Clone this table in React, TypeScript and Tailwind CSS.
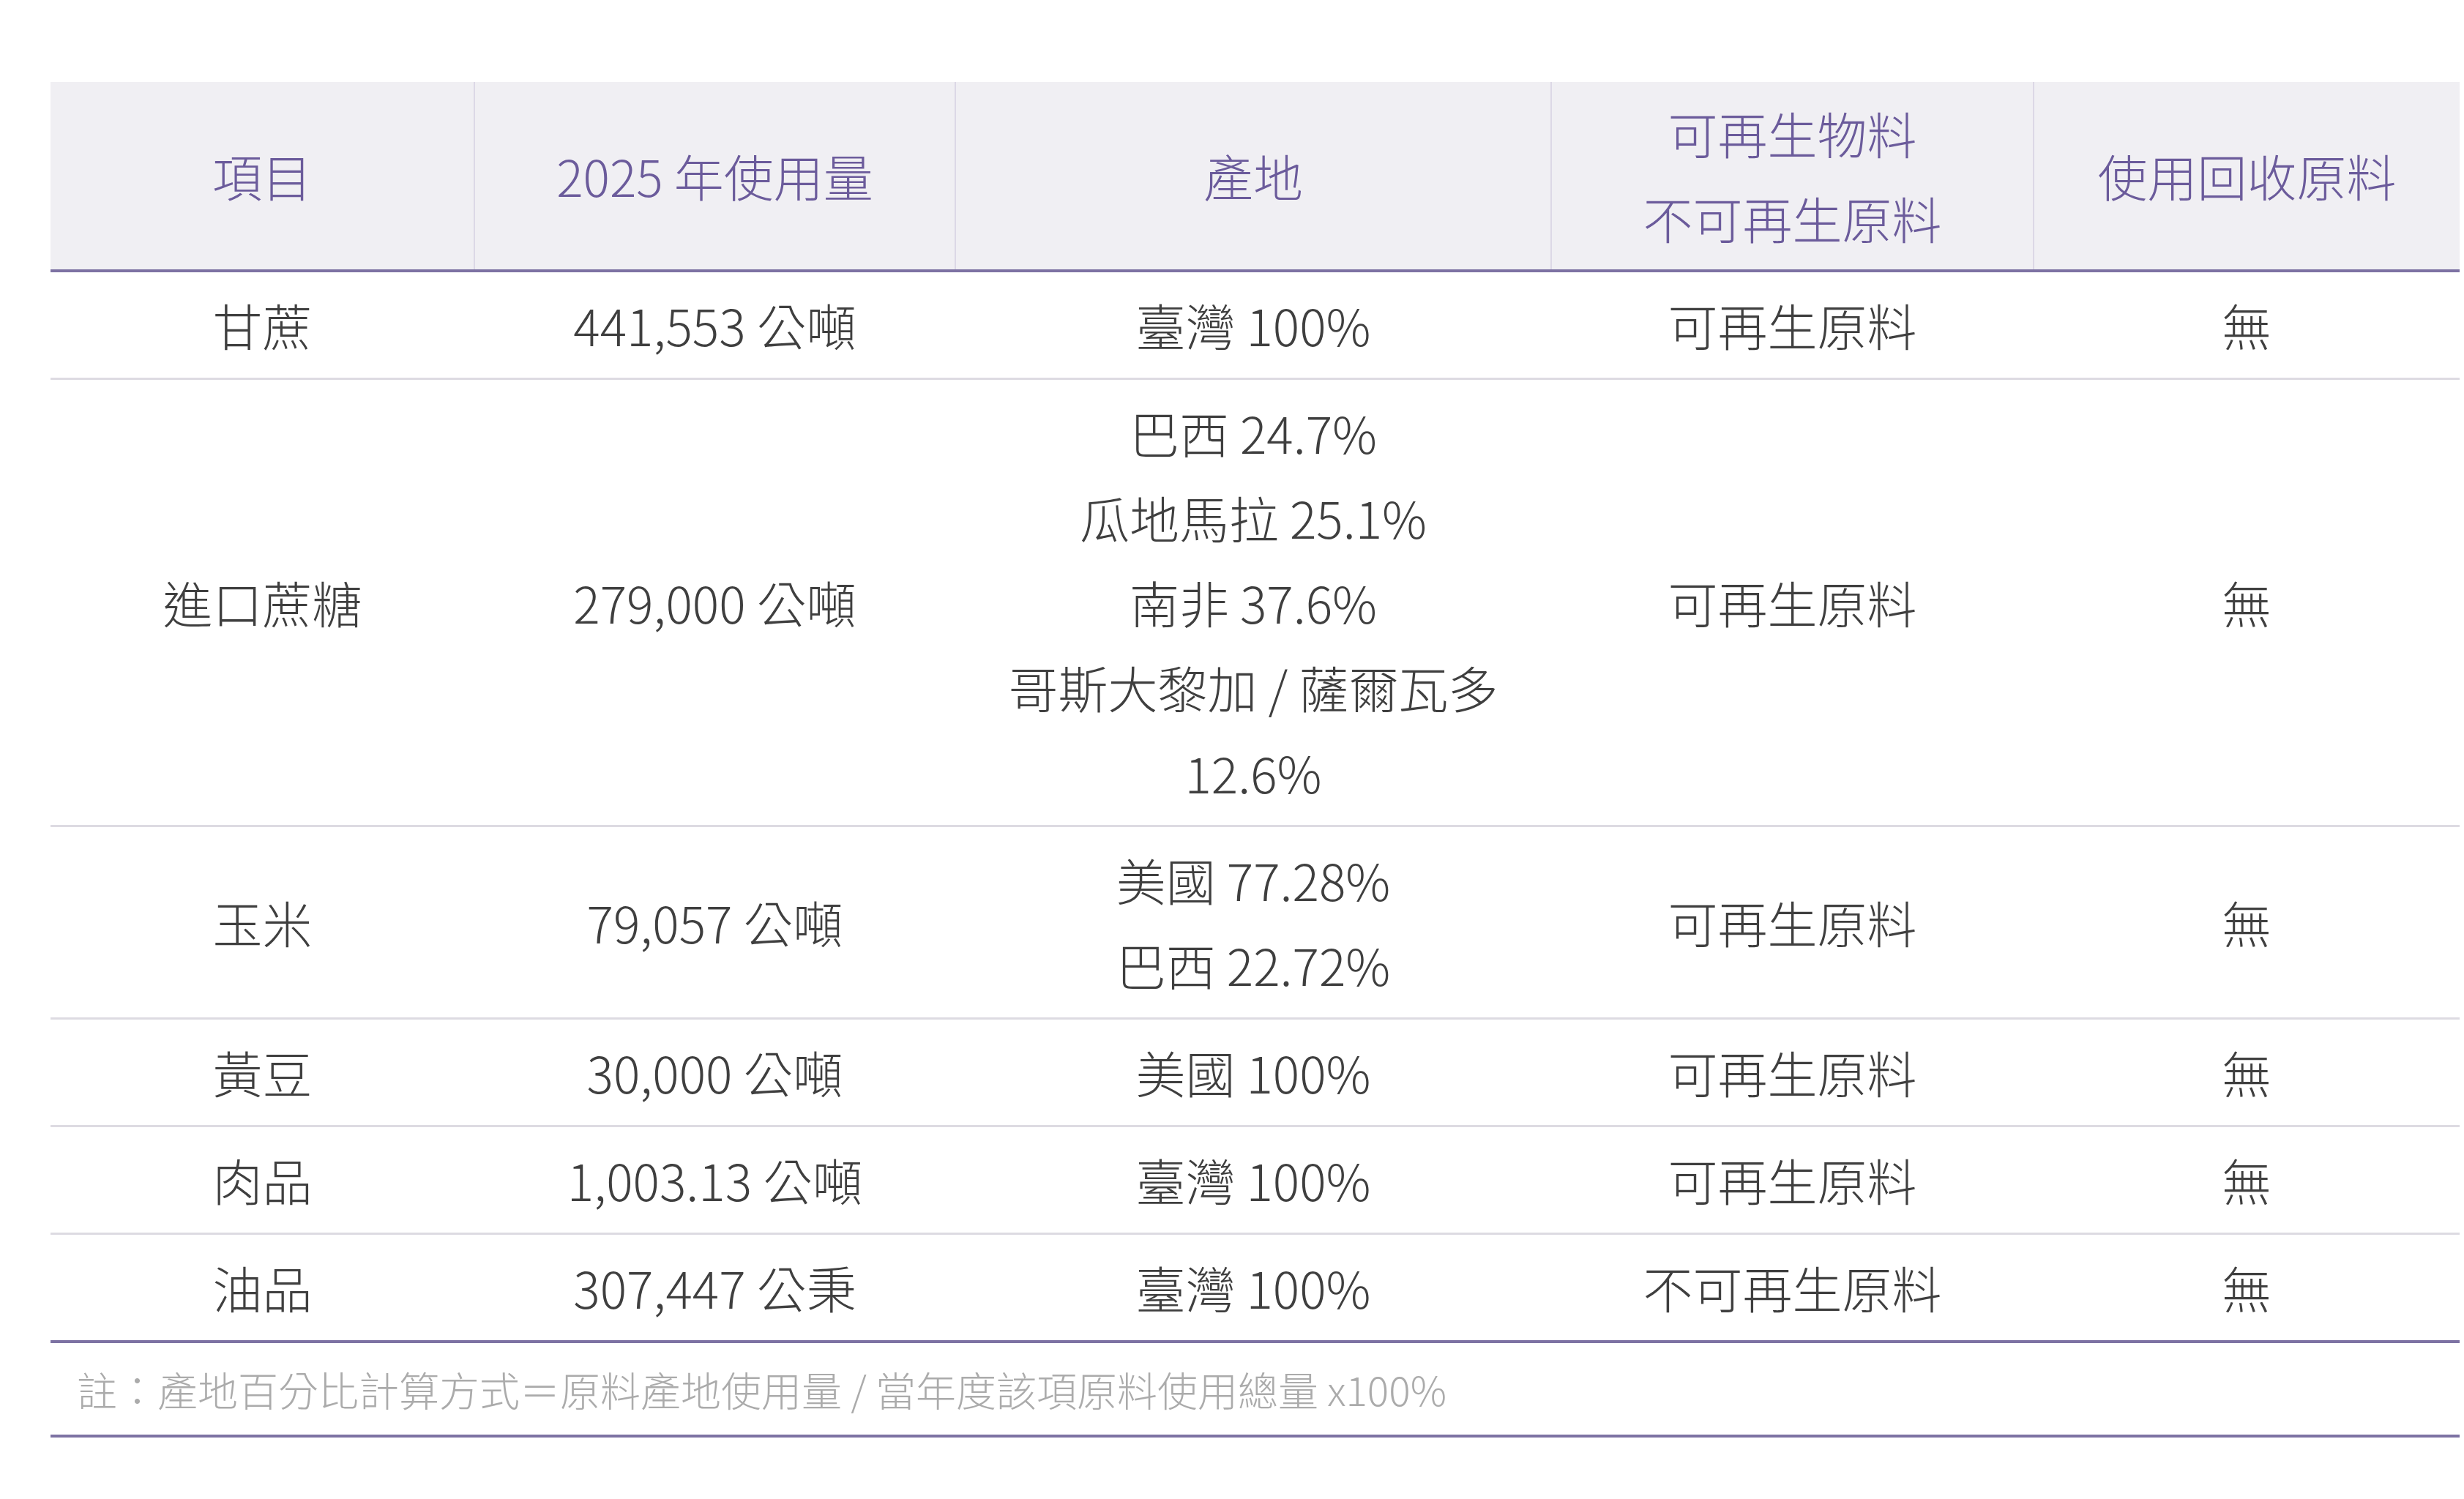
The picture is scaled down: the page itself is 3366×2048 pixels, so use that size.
const rows: { item: string; amount: string; origin: string[]; kind: string; recycled: string }[] = [
  { item: "甘蔗", amount: "441,553 公噸", origin: ["臺灣 100%"], kind: "可再生原料", recycled: "無" },
  {
    item: "進口蔗糖",
    amount: "279,000 公噸",
    origin: ["巴西 24.7%", "瓜地馬拉 25.1%", "南非 37.6%", "哥斯大黎加 / 薩爾瓦多", "12.6%"],
    kind: "可再生原料",
    recycled: "無",
  },
  { item: "玉米", amount: "79,057 公噸", origin: ["美國 77.28%", "巴西 22.72%"], kind: "可再生原料", recycled: "無" },
  { item: "黃豆", amount: "30,000 公噸", origin: ["美國 100%"], kind: "可再生原料", recycled: "無" },
  { item: "肉品", amount: "1,003.13 公噸", origin: ["臺灣 100%"], kind: "可再生原料", recycled: "無" },
  { item: "油品", amount: "307,447 公秉", origin: ["臺灣 100%"], kind: "不可再生原料", recycled: "無" },
];

export default function App() {
  return (
    <div
      className="min-h-screen bg-white pt-[112px] pl-[69px]"
      style={{ fontFamily: '"Noto Sans CJK TC", "Noto Sans", sans-serif' }}
    >
      <table className="w-[3291px] border-collapse table-fixed text-center font-light text-[68px] leading-[116px]">
        <colgroup>
          <col className="w-[579px]" />
          <col className="w-[657px]" />
          <col className="w-[814px]" />
          <col className="w-[659px]" />
          <col className="w-[582px]" />
        </colgroup>
        <thead>
          <tr className="bg-[#f0eff3] text-[#6b5b9b] border-b-4 border-[#7d72a3]">
            <th className="font-light py-[12px] border-r-2 border-[#dcd8e6]">項目</th>
            <th className="font-light py-[12px] border-r-2 border-[#dcd8e6]">2025 年使用量</th>
            <th className="font-light py-[12px] border-r-2 border-[#dcd8e6]">產地</th>
            <th className="font-light py-[12px] border-r-2 border-[#dcd8e6]">
              <div>可再生物料</div>
              <div>不可再生原料</div>
            </th>
            <th className="font-light py-[12px]">使用回收原料</th>
          </tr>
        </thead>
        <tbody className="text-[#3f3f3f]">
          {rows.map((r, i) => (
            <tr
              key={r.item}
              className={
                i === rows.length - 1
                  ? "border-b-4 border-[#7d72a3]"
                  : "border-b-[3px] border-[#dddbe2]"
              }
            >
              <td className="py-[14px] align-middle">{r.item}</td>
              <td className="py-[14px] align-middle">{r.amount}</td>
              <td className="py-[14px] align-middle">
                {r.origin.map((o) => (
                  <div key={o}>{o}</div>
                ))}
              </td>
              <td className="py-[14px] align-middle">{r.kind}</td>
              <td className="py-[14px] align-middle">{r.recycled}</td>
            </tr>
          ))}
          <tr className="border-b-4 border-[#7d72a3]">
            <td
              colSpan={5}
              className="text-left text-[55px] leading-[92px] text-[#ababab] pl-[36px] pt-[16px] pb-[17px]"
            >
              註：產地百分比計算方式＝原料產地使用量 / 當年度該項原料使用總量 x100%
            </td>
          </tr>
        </tbody>
      </table>
    </div>
  );
}
